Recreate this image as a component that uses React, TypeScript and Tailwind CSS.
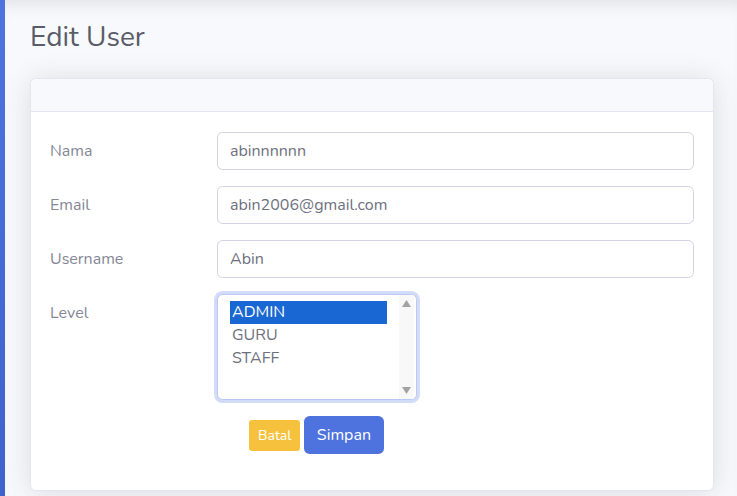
import React from "react";

const font = { fontFamily: "Nunito, Lato, 'Open Sans', sans-serif" };

function TextRow({ label, value }: { label: string; value: string }) {
  return (
    <div className="flex items-center mb-4">
      <label className="w-[167px] shrink-0 text-[16px] text-[#858796]">{label}</label>
      <div className="flex-1 h-[38px] flex items-center px-3 border border-[#d1d3e2] rounded-[5.6px] bg-white text-[16px] text-[#6e707e]">
        {value}
      </div>
    </div>
  );
}

function LevelSelect() {
  const options = ["ADMIN", "GURU", "STAFF"];
  return (
    <div className="w-[200px] h-[106px] border border-[#bac8f3] rounded-[5.6px] bg-white shadow-[0_0_0_3px_rgba(78,115,223,0.25)] flex">
      <div className="flex-1 pl-[12px] pt-[6px] pr-[12px]">
        {options.map((o, i) => (
          <div
            key={o}
            className={
              i === 0
                ? "h-[23px] leading-[23px] px-[2px] bg-[#1967d2] text-white text-[16px]"
                : "h-[23px] leading-[23px] px-[2px] text-[#6e707e] text-[16px]"
            }
          >
            {o}
          </div>
        ))}
      </div>
      <div className="w-[15px] flex flex-col justify-between items-center py-[5px] mr-[2px] bg-[#f8f8f8]">
        <svg width="9" height="7" viewBox="0 0 9 7"><path d="M4.5 0 L9 7 L0 7 Z" fill="#a3a3a3" /></svg>
        <svg width="9" height="7" viewBox="0 0 9 7"><path d="M0 0 L9 0 L4.5 7 Z" fill="#a3a3a3" /></svg>
      </div>
    </div>
  );
}

export default function App() {
  return (
    <div className="flex min-h-[496px] bg-[#f8f9fc]" style={font}>
      <div className="w-[5px] shrink-0 bg-gradient-to-b from-[#4e73df] to-[#3f62cc]" />
      <div className="flex-1 pl-[25px] pr-[23px] pt-[20px] shadow-[inset_0_14px_16px_-10px_rgba(58,59,69,0.12)]">
        <h3 className="text-[28px] leading-[34px] text-[#5a5c69] mb-[24px]">Edit User</h3>
        <div className="bg-white border border-[#e3e6f0] rounded-[5.6px] shadow-[0_2px_28px_0_rgba(58,59,69,0.15)]">
          <div className="h-[33px] bg-[#f8f9fc] border-b border-[#e3e6f0] rounded-t-[5.6px]" />
          <div className="px-[19px] pt-[20px] pb-[36px]">
            <TextRow label="Nama" value="abinnnnnn" />
            <TextRow label="Email" value="abin2006@gmail.com" />
            <TextRow label="Username" value="Abin" />
            <div className="flex items-start mb-[16px]">
              <label className="w-[167px] shrink-0 text-[16px] text-[#858796] pt-[7px]">Level</label>
              <LevelSelect />
            </div>
            <div className="flex items-center gap-[4px] pl-[199px]">
              <button className="h-[31px] px-[9px] rounded-[3.2px] bg-[#f6c23e] text-white text-[14px]">Batal</button>
              <button className="h-[38px] px-[12.5px] rounded-[5.6px] bg-[#4e73df] text-white text-[16px]">Simpan</button>
            </div>
          </div>
        </div>
      </div>
    </div>
  );
}
